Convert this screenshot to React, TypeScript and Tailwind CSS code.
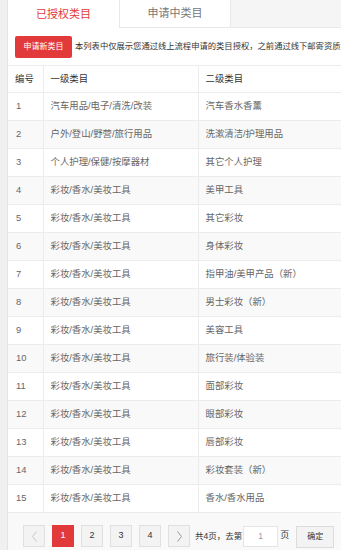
import React from 'react';

const rows: [string, string][] = [
  ['汽车用品/电子/清洗/改装', '汽车香水香薰'],
  ['户外/登山/野营/旅行用品', '洗漱清洁/护理用品'],
  ['个人护理/保健/按摩器材', '其它个人护理'],
  ['彩妆/香水/美妆工具', '美甲工具'],
  ['彩妆/香水/美妆工具', '其它彩妆'],
  ['彩妆/香水/美妆工具', '身体彩妆'],
  ['彩妆/香水/美妆工具', '指甲油/美甲产品（新）'],
  ['彩妆/香水/美妆工具', '男士彩妆（新）'],
  ['彩妆/香水/美妆工具', '美容工具'],
  ['彩妆/香水/美妆工具', '旅行装/体验装'],
  ['彩妆/香水/美妆工具', '面部彩妆'],
  ['彩妆/香水/美妆工具', '眼部彩妆'],
  ['彩妆/香水/美妆工具', '唇部彩妆'],
  ['彩妆/香水/美妆工具', '彩妆套装（新）'],
  ['彩妆/香水/美妆工具', '香水/香水用品'],
];

const font = { fontFamily: '"Liberation Sans", "Noto Sans CJK SC", sans-serif' };

export default function App() {
  return (
    <div className="flex h-[550px] w-[341px] overflow-hidden bg-white text-[9.4px]" style={font}>
      {/* left gutter */}
      <div className="w-[8px] shrink-0 border-r border-[#e4e4e4] bg-[#f0f0f0]" />

      <div className="flex min-w-0 flex-1 flex-col">
        {/* tabs */}
        <div className="flex h-[28px] shrink-0 bg-[#f5f5f5]">
          <div className="flex w-[111px] shrink-0 items-center justify-center bg-white text-[11px] text-[#e4393c]">
            已授权类目
          </div>
          <div className="flex w-[112px] shrink-0 items-center justify-center border-b border-l border-r border-[#e8e8e8] bg-white text-[11px] text-[#777]">
            申请中类目
          </div>
          <div className="flex-1 border-b border-[#e8e8e8]" />
        </div>

        {/* notice */}
        <div className="flex h-[37px] shrink-0 items-center overflow-hidden whitespace-nowrap pl-[7px]">
          <button className="flex h-[22px] w-[57px] shrink-0 items-center justify-center rounded-[2px] bg-[#e23a3a] text-[8px] text-white">
            申请新类目
          </button>
          <span className="ml-[3px] text-[8.3px] text-[#333]">
            本列表中仅展示您通过线上流程申请的类目授权，之前通过线下邮寄资质
          </span>
        </div>

        {/* table */}
        <table className="w-full shrink-0 table-fixed border-collapse border-t border-[#ececec]">
          <colgroup>
            <col className="w-[35px]" />
            <col className="w-[155px]" />
            <col />
          </colgroup>
          <thead>
            <tr className="h-[27px] text-left text-[#333]">
              <th className="border-b border-r border-[#ececec] pl-[7px] font-normal">编号</th>
              <th className="border-b border-r border-[#ececec] pl-[7px] font-normal">一级类目</th>
              <th className="border-b border-[#ececec] pl-[7px] font-normal">二级类目</th>
            </tr>
          </thead>
          <tbody>
            {rows.map((r, i) => (
              <tr key={i} className={`h-[28px] text-[#666] ${i % 2 === 1 ? 'bg-[#f9f9f9]' : 'bg-white'}`}>
                <td className="border-b border-r border-[#ececec] pl-[8px]">{i + 1}</td>
                <td className="whitespace-nowrap border-b border-r border-[#ececec] pl-[7px]">{r[0]}</td>
                <td className="whitespace-nowrap border-b border-[#ececec] pl-[7px]">{r[1]}</td>
              </tr>
            ))}
          </tbody>
        </table>

        {/* pagination */}
        <div className="flex flex-1 items-start bg-[#f9f9f9] pl-[15px] pt-[12px] text-[#333]">
          <div className="flex items-center gap-[7px]">
            <span className="flex h-[22px] w-[22px] items-center justify-center border border-[#e0e0e0] bg-[#f3f3f3] text-[#c8c8c8]">
              <svg width="7" height="11" viewBox="0 0 7 11" fill="none" stroke="currentColor" strokeWidth="1">
                <path d="M5.5 0.5 L1.5 5.5 L5.5 10.5" />
              </svg>
            </span>
            <span className="flex h-[22px] w-[22px] items-center justify-center bg-[#e23a3a] text-[9px] text-white">1</span>
            {['2', '3', '4'].map((n) => (
              <span key={n} className="flex h-[22px] w-[22px] items-center justify-center border border-[#e0e0e0] bg-[#f3f3f3] text-[9px]">
                {n}
              </span>
            ))}
            <span className="flex h-[22px] w-[22px] items-center justify-center border border-[#e0e0e0] bg-[#f3f3f3] text-[#999]">
              <svg width="7" height="11" viewBox="0 0 7 11" fill="none" stroke="currentColor" strokeWidth="1">
                <path d="M1.5 0.5 L5.5 5.5 L1.5 10.5" />
              </svg>
            </span>
          </div>
          <div className="ml-[5px] flex h-[22px] items-center whitespace-nowrap text-[8.5px]">
            <span>共4页，去第</span>
            <span className="ml-[1px] flex h-[21px] w-[35px] items-center justify-center border border-[#e5e5e5] bg-white text-[#999]">1</span>
            <span className="ml-[2px] text-[9px]">页</span>
            <span className="ml-[7px] mt-[2px] flex h-[22px] w-[38px] items-center justify-center border border-[#dcdcdc] bg-[#f3f3f3] text-[8px]">确定</span>
          </div>
        </div>
      </div>
    </div>
  );
}
